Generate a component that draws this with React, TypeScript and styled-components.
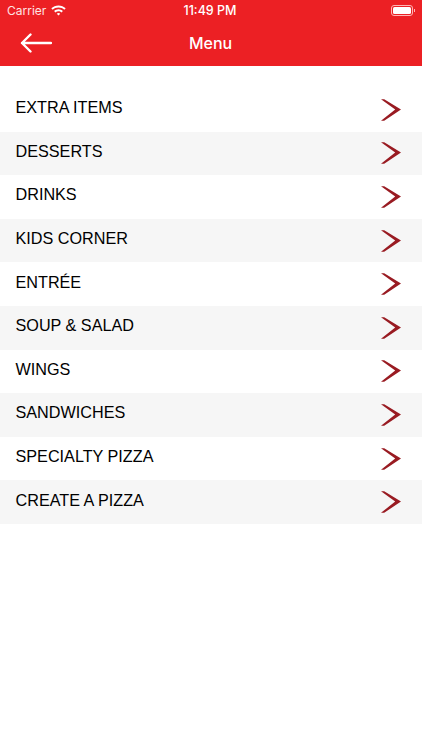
import React from "react";
import styled, { createGlobalStyle } from "styled-components";

const Global = createGlobalStyle`
  html, body { margin: 0; padding: 0; background: #fff; }
  body { font-family: "Liberation Sans", Arial, sans-serif; }
`;

const Page = styled.div`
  width: 422px;
  height: 750px;
  overflow: hidden;
  background: #fff;
  display: flex;
  flex-direction: column;
`;

const Header = styled.header`
  background: #ec2024;
  height: 66px;
  box-sizing: border-box;
  color: #fff;
  display: flex;
  flex-direction: column;
`;

const StatusBar = styled.div`
  height: 20px;
  padding: 0 8px 0 7px;
  display: grid;
  grid-template-columns: 1fr auto 1fr;
  align-items: center;
  font-family: Inter, "Liberation Sans", sans-serif;
  font-size: 12px;
  font-weight: 500;
`;

const Carrier = styled.div`
  display: flex;
  align-items: center;
  gap: 5px;
  font-weight: 400;
  color: #ffe3e3;
`;

const Clock = styled.div`
  font-size: 12.5px;
  margin-left: -1px;
`;

const Battery = styled.div`
  justify-self: end;
  width: 22px;
  height: 11px;
  box-sizing: border-box;
  border: 1px solid #ffb5b5;
  border-radius: 3px;
  padding: 1px;
  margin-right: 1px;
  display: flex;
  position: relative;
  &::before {
    content: "";
    flex: 1;
    background: #fff;
    border-radius: 1.5px;
  }
  &::after {
    content: "";
    position: absolute;
    right: -3px;
    top: 3px;
    width: 1.5px;
    height: 3px;
    background: #ffb5b5;
  }
`;

const NavBar = styled.div`
  flex: 1;
  display: grid;
  grid-template-columns: 1fr auto 1fr;
  align-items: center;
`;

const Title = styled.h1`
  margin: 0 0 0 -1px;
  font-family: Inter, "Liberation Sans", sans-serif;
  font-size: 16px;
  font-weight: 500;
  line-height: 1;
`;

const BackButton = styled.button`
  justify-self: start;
  margin-left: 20px;
  background: none;
  border: 0;
  padding: 0;
  display: flex;
`;

const List = styled.ul`
  list-style: none;
  margin: 22px 0 0;
  padding: 0;
`;

const Row = styled.li<{ $shaded: boolean }>`
  height: 43.6px;
  box-sizing: border-box;
  padding: 0 21px 0 15.5px;
  display: flex;
  align-items: center;
  justify-content: space-between;
  background: ${(p) => (p.$shaded ? "#f6f6f6" : "#fff")};
`;

const Label = styled.span`
  font-size: 16.2px;
  line-height: 18px;
  color: #000;
  margin-bottom: 5px;
`;

const Chevron = () => (
  <svg width="20" height="22" viewBox="0 0 20 22" aria-hidden="true">
    <path d="M0 0.2H3.2L20 10.4L3.2 21.8H0L14.2 10.6Z" fill="#991b22" />
  </svg>
);

const Wifi = () => (
  <svg width="15" height="11" viewBox="0 0 15 11" aria-hidden="true">
    <path d="M7.5 0.4C4.7 0.4 2.2 1.5 0.3 3.3L1.7 4.8C3.2 3.3 5.2 2.5 7.5 2.5S11.8 3.3 13.3 4.8L14.7 3.3C12.8 1.5 10.3 0.4 7.5 0.4Z" fill="#fff" />
    <path d="M7.5 4.2C5.8 4.2 4.3 4.9 3.1 6L4.5 7.5C5.3 6.8 6.3 6.3 7.5 6.3S9.7 6.8 10.5 7.5L11.9 6C10.7 4.9 9.2 4.2 7.5 4.2Z" fill="#fff" />
    <path d="M7.5 8C6.8 8 6.2 8.3 5.8 8.7L7.5 10.6L9.2 8.7C8.8 8.3 8.2 8 7.5 8Z" fill="#fff" />
  </svg>
);

const BackArrow = () => (
  <svg width="32" height="20" viewBox="0 0 32 20" fill="none" aria-hidden="true">
    <path d="M31 10H2M10.5 1.5L2 10L10.5 18.5" stroke="#fff" strokeWidth="2.4" strokeLinecap="round" strokeLinejoin="round" />
  </svg>
);

const items = [
  "EXTRA ITEMS",
  "DESSERTS",
  "DRINKS",
  "KIDS CORNER",
  "ENTRÉE",
  "SOUP & SALAD",
  "WINGS",
  "SANDWICHES",
  "SPECIALTY PIZZA",
  "CREATE A PIZZA",
];

export default function App() {
  return (
    <Page>
      <Global />
      <Header>
        <StatusBar>
          <Carrier>
            Carrier <Wifi />
          </Carrier>
          <Clock>11:49 PM</Clock>
          <Battery />
        </StatusBar>
        <NavBar>
          <BackButton aria-label="Back">
            <BackArrow />
          </BackButton>
          <Title>Menu</Title>
        </NavBar>
      </Header>
      <List>
        {items.map((item, i) => (
          <Row key={item} $shaded={i % 2 === 1}>
            <Label>{item}</Label>
            <Chevron />
          </Row>
        ))}
      </List>
    </Page>
  );
}
